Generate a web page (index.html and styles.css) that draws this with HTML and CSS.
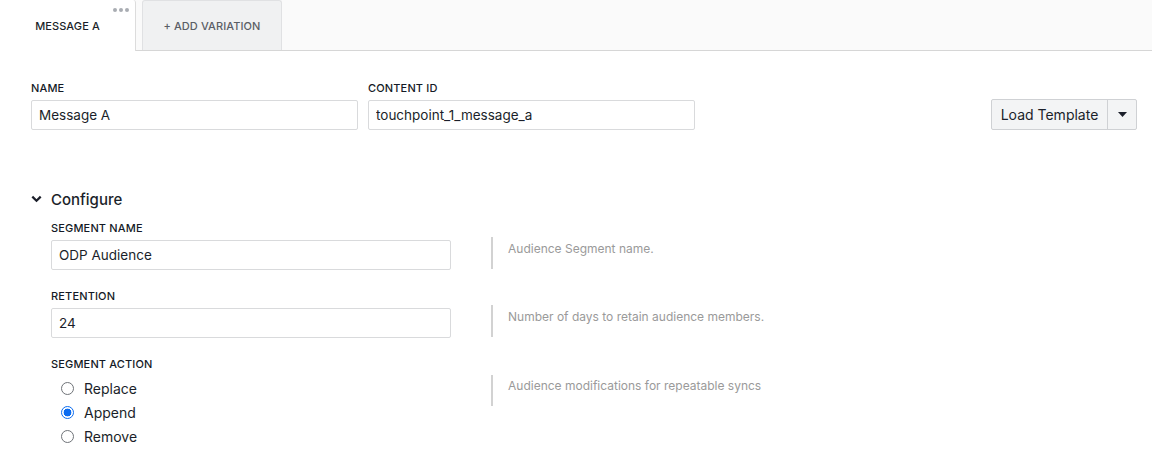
FILE: index.html
```html
<!DOCTYPE html>
<html lang="en">
<head>
<meta charset="utf-8">
<title>Message A</title>
<link rel="stylesheet" href="styles.css">
</head>
<body>
<div class="tabs">
  <div class="tab tab-active">
    <span class="tab-menu"><i></i><i></i><i></i></span>
    MESSAGE A
  </div>
  <div class="tab tab-add">+ ADD VARIATION</div>
</div>

<div class="page">
  <div class="top-row">
    <div class="field field-top">
      <label class="label">NAME</label>
      <input class="input" type="text" value="Message A">
    </div>
    <div class="field field-top">
      <label class="label">CONTENT ID</label>
      <input class="input" type="text" value="touchpoint_1_message_a">
    </div>
    <div class="split-btn">
      <button class="split-main">Load Template</button>
      <button class="split-caret"><svg width="9" height="5" viewBox="0 0 9 5"><path d="M0 0h9L4.5 5z" fill="#1b1f2a"/></svg></button>
    </div>
  </div>

  <div class="section">
    <div class="section-head">
      <svg class="chev" width="11" height="8" viewBox="0 0 11 8"><path d="M1.3 1.6l4.2 4.2 4.2-4.2" fill="none" stroke="#1b1f2a" stroke-width="2.2"/></svg>
      <span>Configure</span>
    </div>

    <div class="cfg-row">
      <div class="field">
        <label class="label">SEGMENT NAME</label>
        <input class="input" type="text" value="ODP Audience">
      </div>
      <div class="help">Audience Segment name.</div>
    </div>

    <div class="cfg-row">
      <div class="field">
        <label class="label">RETENTION</label>
        <input class="input" type="text" value="24">
      </div>
      <div class="help">Number of days to retain audience members.</div>
    </div>

    <div class="cfg-row">
      <div class="field">
        <label class="label">SEGMENT ACTION</label>
        <div class="radios">
          <label class="radio"><input type="radio" name="action"><span>Replace</span></label>
          <label class="radio"><input type="radio" name="action" checked><span>Append</span></label>
          <label class="radio"><input type="radio" name="action"><span>Remove</span></label>
        </div>
      </div>
      <div class="help help-radio">Audience modifications for repeatable syncs</div>
    </div>
  </div>
</div>
</body>
</html>
```
FILE: styles.css
```css
* { box-sizing: border-box; }

body {
  margin: 0;
  font-family: Inter, "Noto Sans", sans-serif;
  color: #1b1f2a;
  background: #fff;
}

/* tab strip */
.tabs {
  display: flex;
  align-items: flex-start;
  height: 51px;
  background: #fafafa;
  border-bottom: 1px solid #d6d6d6;
}

.tab {
  position: relative;
  display: flex;
  align-items: center;
  justify-content: center;
  font-size: 11px;
  font-weight: 500;
  letter-spacing: 0.1px;
}

.tab-active {
  width: 136px;
  height: 51px;
  background: #fff;
  border-right: 1px solid #dcdcdc;
  border-top-right-radius: 3px;
  color: #1b1f2a;
}

.tab-menu {
  position: absolute;
  top: 8px;
  right: 6px;
  display: flex;
  gap: 2px;
}
.tab-menu i {
  width: 4px;
  height: 4px;
  border-radius: 50%;
  background: #a9adb3;
}

.tab-add {
  margin-left: 6px;
  width: 140px;
  height: 50px;
  background: #f0f1f2;
  border: 1px solid #e0e1e3;
  border-bottom: none;
  border-radius: 3px 3px 0 0;
  color: #5a5e66;
}

.page {
  padding: 0 15px 0 31px;
}

.top-row {
  display: flex;
  align-items: flex-start;
  gap: 10px;
  padding-top: 30px;
}

.field {
  display: flex;
  flex-direction: column;
  gap: 5px;
}

.field-top { width: 327px; }

.label {
  font-size: 11px;
  font-weight: 500;
  line-height: 14px;
  color: #141a26;
  letter-spacing: 0.15px;
}

.input {
  height: 30px;
  border: 1px solid #d9dadc;
  border-radius: 2px;
  padding: 0 7px;
  font: inherit;
  font-size: 13.5px;
  color: #1b1f2a;
  background: #fff;
}

.split-btn {
  margin-left: auto;
  margin-top: 18px;
  display: flex;
  height: 31px;
  border: 1px solid #cfd1d4;
  border-radius: 2px;
  background: #f3f4f5;
}
.split-btn button {
  border: none;
  background: transparent;
  font: inherit;
  font-size: 14px;
  color: #1b1f2a;
  padding: 0;
}
.split-main { width: 115px; }
.split-caret {
  width: 29px;
  border-left: 1px solid #cfd1d4 !important;
  display: flex;
  align-items: center;
  justify-content: center;
}

/* configure section */
.section {
  padding-top: 59px;
}

.section-head {
  display: flex;
  align-items: center;
  height: 20px;
  font-size: 15px;
  font-weight: 500;
  color: #1b1f2a;
}
.chev { margin: 0 9px 0 0; }

.cfg-row {
  display: flex;
  align-items: flex-start;
  gap: 40px;
  padding-left: 20px;
  margin-top: 12px;
}
.cfg-row + .cfg-row { margin-top: 19px; }

.cfg-row .field { width: 400px; }

.help {
  margin-top: 16px;
  min-height: 32px;
  border-left: 2px solid #d2d2d2;
  padding: 5px 0 0 15px;
  font-size: 12px;
  line-height: 14px;
  color: #9a9a9a;
}
.help-radio {
  margin-top: 18px;
  min-height: 31px;
  padding-top: 4px;
}

.radios {
  display: flex;
  flex-direction: column;
  padding-left: 10px;
}

.radio {
  display: flex;
  align-items: center;
  height: 24px;
  font-size: 14px;
  color: #1b1f2a;
}

.radio input {
  appearance: none;
  -webkit-appearance: none;
  margin: 0 10px 0 0;
  width: 13px;
  height: 13px;
  border: 1px solid #6f7378;
  border-radius: 50%;
  background: #fff;
}
.radio input:checked {
  border-color: #0b6cf0;
  background: radial-gradient(circle, #0b6cf0 0 3.6px, #fff 4.2px);
}
```
